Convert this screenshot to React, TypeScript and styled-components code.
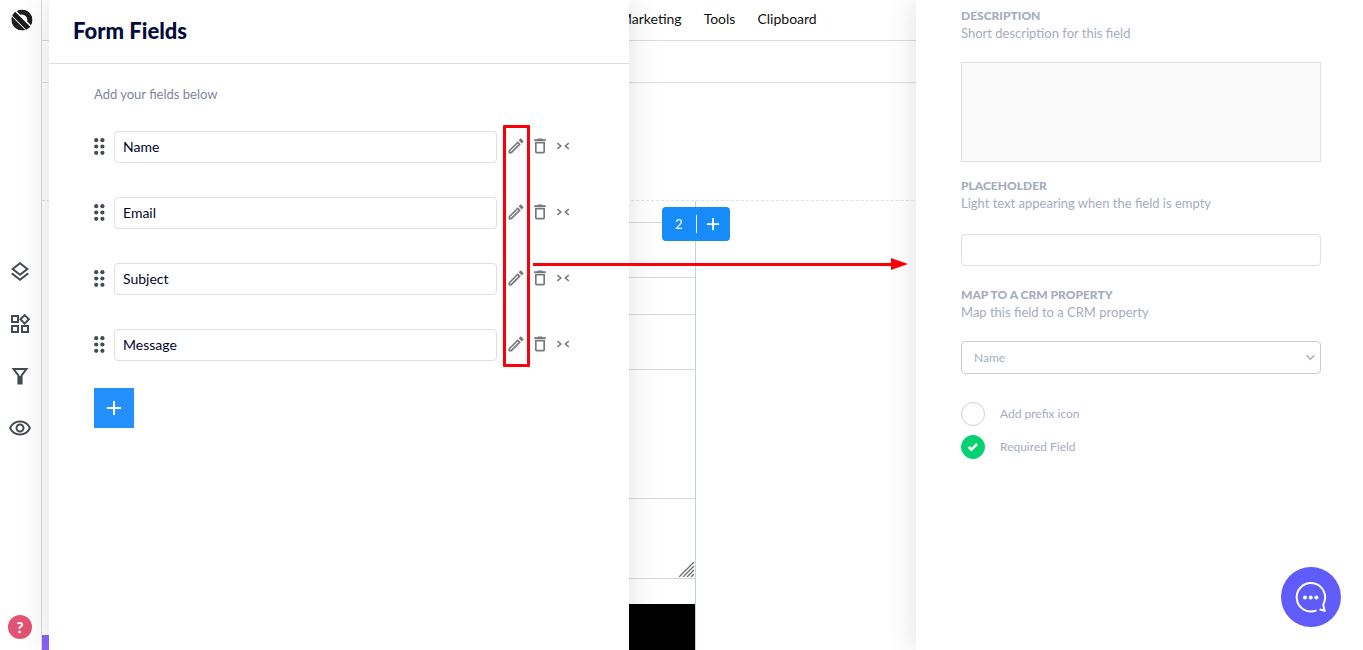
import React from "react";
import styled, { createGlobalStyle } from "styled-components";
import {
  MdOutlineLayers,
  MdOutlineWidgets,
  MdOutlineRemoveRedEye,
  MdOutlineEdit,
  MdDeleteOutline,
} from "react-icons/md";

const GlobalStyle = createGlobalStyle`
  *, *::before, *::after { box-sizing: border-box; }
  html, body { margin: 0; padding: 0; }
  body {
    font-family: Lato, "Liberation Sans", sans-serif;
    font-size: 14px;
    color: #04042c;
    background: #fff;
    overflow: hidden;
  }
  button { font: inherit; padding: 0; border: 0; background: none; cursor: pointer; }
  input, textarea, select { font: inherit; color: inherit; margin: 0; }
  svg { display: block; }
`;

const Shell = styled.div`
  position: relative;
  display: grid;
  grid-template-columns: 41px 8px 580px minmax(0, 1fr) 447px;
  grid-template-rows: 100vh;
`;

/* ---------- Left rail ---------- */

const Rail = styled.nav`
  grid-column: 1;
  grid-row: 1;
  display: flex;
  flex-direction: column;
  align-items: center;
  justify-content: space-between;
  padding: 9px 1px 11px 0;
  color: #444b54;
  background: #fff;
`;

const LogoLink = styled.a`
  padding-left: 3px;
`;

const RailTools = styled.div`
  display: flex;
  flex-direction: column;
  gap: 28px;
  padding-top: 54px;
`;

const IconButton = styled.button`
  display: flex;
  align-items: center;
  justify-content: center;
  color: inherit;
`;

const HelpButton = styled.button`
  width: 24px;
  height: 24px;
  border-radius: 50%;
  background: #e25272;
  color: #fff;
  font-size: 15px;
  font-weight: 900;
`;

/* ---------- Page editor behind the drawers ---------- */

const Editor = styled.main`
  position: relative;
  grid-column: 2 / -1;
  grid-row: 1;
  min-width: 0;
  overflow: hidden;
  border-left: 1px solid #dadada;
`;

const Menu = styled.nav`
  display: flex;
  align-items: center;
  gap: 22px;
  height: 41px;
  padding: 0 0 2px 577px;
  border-bottom: 1px solid #dcdcdc;
`;

const MenuLink = styled.a`
  color: #111;
  text-decoration: none;
  font-size: 14px;
  line-height: 20px;
`;

const SubBar = styled.div`
  height: 42px;
  border-bottom: 1px solid #dcdcdc;
`;

const Section = styled.section`
  margin-top: 117px;
  border-top: 1px dashed #e2e2e2;
`;

const FormModule = styled.div`
  position: relative;
  display: flex;
  flex-direction: column;
  gap: 36px;
  width: 654px;
  height: 450px;
  padding: 21px 0 0 30px;
  border-right: 1px solid #b9d3ec;
`;

const PreviewInput = styled.input`
  flex: none;
  height: 56px;
  border: 1px solid #d8d8d8;
  border-right: 0;
  background: #fff;
`;

const PreviewArea = styled.div`
  position: relative;
  display: flex;
  flex: none;
  margin: 92px 0 -11px;

  textarea {
    flex: 1;
    height: 81px;
    resize: none;
    border: 1px solid #d8d8d8;
    border-right: 0;
    background: #fff;
  }

  svg {
    position: absolute;
    right: 1px;
    bottom: 2px;
  }
`;

const Submit = styled.button`
  flex: none;
  height: 62px;
  background: #000;
`;

const ModuleBadge = styled.div`
  position: absolute;
  top: 6px;
  right: -35px;
  display: flex;
  align-items: center;
  width: 68px;
  height: 34px;
  border-radius: 4px;
  background: #178cf9;
  color: #fff;
  font-size: 13px;

  span {
    flex: 1;
    text-align: center;
  }

  button {
    flex: 1;
    display: flex;
    justify-content: center;
    align-items: center;
    height: 18px;
    border-left: 1px solid #fff;
    color: #fff;
  }
`;

const CornerTab = styled.div`
  position: absolute;
  left: 0;
  bottom: 0;
  width: 30px;
  height: 15px;
  background: #8a63f5;
`;

/* ---------- Form fields drawer ---------- */

const Drawer = styled.section`
  grid-column: 3;
  grid-row: 1;
  z-index: 1;
  background: #fff;
  box-shadow: 0 0 30px rgba(0, 0, 0, 0.13);
`;

const DrawerHeader = styled.header`
  display: flex;
  align-items: center;
  height: 64px;
  padding: 0 24px 2px;
  border-bottom: 1px solid #dedede;

  h1 {
    margin: 0;
    font-size: 22px;
    line-height: 28px;
    font-weight: 900;
    color: #020b3c;
  }
`;

const DrawerBody = styled.div`
  padding: 20px 45px;
`;

const Hint = styled.p`
  margin: 0;
  font-size: 13px;
  line-height: 20px;
  color: #7f849c;
`;

const FieldList = styled.ul`
  display: flex;
  flex-direction: column;
  gap: 34px;
  margin: 27px 0;
  padding: 0;
  list-style: none;
`;

const FieldRow = styled.li`
  display: flex;
  align-items: center;
  color: #75787e;
`;

const DragHandle = styled(IconButton)`
  width: 20px;
  padding-bottom: 2px;
  justify-content: flex-start;
  color: #444b54;
`;

const TextInput = styled.input`
  flex: 1;
  min-width: 0;
  width: 100%;
  height: 32px;
  padding: 0 8px 2px;
  border: 1px solid #dedfe1;
  border-radius: 4px;
  background: #fff;
  color: #04042c;
  font-size: 14px;
`;

const RowActions = styled.div`
  display: flex;
  align-items: center;
  gap: 4px;
  width: 87px;
  padding: 0 9px 2px 9px;
`;

const AddButton = styled(IconButton)`
  width: 40px;
  height: 40px;
  background: #2490fb;
  color: #fff;
`;

/* ---------- Field settings panel ---------- */

const Panel = styled.aside`
  grid-column: 5;
  grid-row: 1;
  z-index: 1;
  padding: 8px 42px 0 45px;
  background: #fff;
  color: #a6acbf;
  box-shadow: 0 0 30px rgba(0, 0, 0, 0.13);
`;

const Setting = styled.div<{ $gap: number }>`
  display: flex;
  flex-direction: column;
  margin-bottom: ${(p) => p.$gap}px;

  label {
    font-size: 12px;
    line-height: 16px;
    font-weight: 900;
    text-transform: uppercase;
  }

  p {
    margin: 0;
    font-size: 13px;
    line-height: 18px;
  }
`;

const DescriptionArea = styled.textarea`
  height: 100px;
  margin-top: 20px;
  border: 1px solid #dedfe1;
  background: #fafafa;
  resize: none;
`;

const PlaceholderInput = styled(TextInput)`
  flex: none;
  margin-top: 22px;
`;

const SelectWrap = styled.div`
  position: relative;
  margin-top: 20px;

  select {
    display: block;
    width: 100%;
    height: 33px;
    padding: 0 12px;
    appearance: none;
    border: 1px solid #cacbdb;
    border-radius: 4px;
    background: #fff;
    font-size: 12px;
  }

  svg {
    position: absolute;
    right: 6px;
    top: 13px;
    pointer-events: none;
  }
`;

const CheckLabel = styled.label`
  position: relative;
  display: flex;
  align-items: center;
  gap: 15px;
  margin-bottom: 9px;
  font-size: 12px;
  line-height: 22px;

  input {
    appearance: none;
    width: 24px;
    height: 24px;
    border: 1px solid #cfcfcf;
    border-radius: 50%;
    background: #fff;
  }

  input:checked {
    border-color: #04d270;
    background: #04d270;
  }

  svg {
    position: absolute;
    left: 6px;
    top: 6px;
    visibility: hidden;
    pointer-events: none;
  }

  input:checked + svg {
    visibility: visible;
  }
`;

const ChatButton = styled.button`
  position: absolute;
  right: 22px;
  bottom: 23px;
  z-index: 2;
  display: flex;
  align-items: center;
  justify-content: center;
  width: 60px;
  height: 60px;
  border-radius: 50%;
  background: #5f5cfb;
`;

/* ---------- Red call-outs drawn over the page ---------- */

const Highlight = styled.div`
  position: absolute;
  z-index: 3;
  left: 503px;
  top: 125px;
  width: 27px;
  height: 242px;
  border: 3px solid #fb0007;
  border-radius: 1px;
  pointer-events: none;
`;

const Arrow = styled.div`
  position: absolute;
  z-index: 3;
  left: 533px;
  right: 455px;
  top: 258px;
  display: flex;
  align-items: center;
  pointer-events: none;

  &::before {
    content: "";
    flex: 1;
    height: 3px;
    background: #fb0007;
  }
`;

const Logo = () => (
  <svg width="22" height="22" viewBox="0 0 22 22" aria-hidden="true">
    <defs>
      <clipPath id="disc">
        <circle cx="11" cy="11" r="10.6" />
      </clipPath>
    </defs>
    <g clipPath="url(#disc)">
      <circle cx="11" cy="11" r="8" fill="none" stroke="#1d1d1d" strokeWidth="5.2" />
      <path d="M-2 0L22 24" stroke="#fff" strokeWidth="8" />
      <path d="M-2 0L22 24" stroke="#1d1d1d" strokeWidth="5" />
      <path d="M-2 6.2L16 24.2" stroke="#1d1d1d" strokeWidth="2" />
    </g>
  </svg>
);

const FunnelIcon = () => (
  <svg width="24" height="24" viewBox="0 0 24 24" fill="none" stroke="currentColor" aria-hidden="true">
    <path d="M5.5 5h13L13.6 11.4v8.1h-3.2v-8.1z" strokeWidth="2" />
    <path d="M12 12v8" strokeWidth="4" />
  </svg>
);

const DotsIcon = () => (
  <svg width="11" height="17" viewBox="0 0 11 17" fill="currentColor" aria-hidden="true">
    {[2.2, 8.5, 14.8].map((y) => (
      <React.Fragment key={y}>
        <circle cx="2.2" cy={y} r="2.1" />
        <circle cx="8.4" cy={y} r="2.1" />
      </React.Fragment>
    ))}
  </svg>
);

const CollapseIcon = () => (
  <svg width="18" height="20" viewBox="0 0 18 20" fill="none" stroke="currentColor" strokeWidth="1.5" aria-hidden="true">
    <path d="M3.4 7.2L6.8 10l-3.4 2.8M14.8 7.2L11.4 10l3.4 2.8" />
  </svg>
);

const PlusIcon = ({ size }: { size: number }) => (
  <svg width={size} height={size} viewBox="0 0 16 16" stroke="currentColor" strokeWidth="2" aria-hidden="true">
    <path d="M8 1v14M1 8h14" />
  </svg>
);

const fields = ["Name", "Email", "Subject", "Message"];

const options = [
  { text: "Add prefix icon", checked: false },
  { text: "Required Field", checked: true },
];

export default function App() {
  return (
    <>
      <GlobalStyle />
      <Shell>
        <Rail aria-label="Tools">
          <LogoLink href="#home" aria-label="Home"><Logo /></LogoLink>
          <RailTools>
            <IconButton aria-label="Layers"><MdOutlineLayers size={24} /></IconButton>
            <IconButton aria-label="Widgets"><MdOutlineWidgets size={24} /></IconButton>
            <IconButton aria-label="Filter"><FunnelIcon /></IconButton>
            <IconButton aria-label="Preview"><MdOutlineRemoveRedEye size={24} /></IconButton>
          </RailTools>
          <HelpButton aria-label="Help">?</HelpButton>
        </Rail>

        <Editor>
          <Menu aria-label="Main menu">
            <MenuLink href="#marketing">Marketing</MenuLink>
            <MenuLink href="#tools">Tools</MenuLink>
            <MenuLink href="#clipboard">Clipboard</MenuLink>
          </Menu>
          <SubBar />
          <Section>
            <FormModule>
              <PreviewInput aria-label="Name preview" />
              <PreviewInput aria-label="Email preview" />
              <PreviewArea>
                <textarea aria-label="Message preview" />
                <svg width="15" height="15" viewBox="0 0 15 15" stroke="#6d6d6d" strokeWidth="1.3" aria-hidden="true">
                  <path d="M0 15L15 0M4 15L15 4M8 15L15 8M12 15L15 12" />
                </svg>
              </PreviewArea>
              <Submit aria-label="Submit" />
              <ModuleBadge>
                <span>2</span>
                <button aria-label="Add module"><PlusIcon size={14} /></button>
              </ModuleBadge>
            </FormModule>
          </Section>
          <CornerTab />
        </Editor>

        <Drawer>
          <DrawerHeader><h1>Form Fields</h1></DrawerHeader>
          <DrawerBody>
            <Hint>Add your fields below</Hint>
            <FieldList>
              {fields.map((name) => (
                <FieldRow key={name}>
                  <DragHandle aria-label={`Move ${name}`}><DotsIcon /></DragHandle>
                  <TextInput aria-label={`${name} field`} defaultValue={name} />
                  <RowActions>
                    <IconButton aria-label={`Edit ${name}`}><MdOutlineEdit size={20} /></IconButton>
                    <IconButton aria-label={`Delete ${name}`}><MdDeleteOutline size={20} /></IconButton>
                    <IconButton aria-label={`Collapse ${name}`}><CollapseIcon /></IconButton>
                  </RowActions>
                </FieldRow>
              ))}
            </FieldList>
            <AddButton aria-label="Add field"><PlusIcon size={16} /></AddButton>
          </DrawerBody>
        </Drawer>

        <Panel>
          <Setting $gap={16}>
            <label htmlFor="description">Description</label>
            <p>Short description for this field</p>
            <DescriptionArea id="description" />
          </Setting>
          <Setting $gap={21}>
            <label htmlFor="placeholder">Placeholder</label>
            <p>Light text appearing when the field is empty</p>
            <PlaceholderInput id="placeholder" />
          </Setting>
          <Setting $gap={28}>
            <label htmlFor="crm">Map to a CRM property</label>
            <p>Map this field to a CRM property</p>
            <SelectWrap>
              <select id="crm" defaultValue="Name">
                <option>Name</option>
              </select>
              <svg width="9" height="7" viewBox="0 0 9 7" fill="none" stroke="#a6acbf" strokeWidth="1.3" aria-hidden="true">
                <path d="M0.7 1.2l3.8 4 3.8-4" />
              </svg>
            </SelectWrap>
          </Setting>
          {options.map(({ text, checked }) => (
            <CheckLabel key={text}>
              <input type="checkbox" defaultChecked={checked} />
              <svg width="12" height="12" viewBox="0 0 12 12" fill="none" stroke="#fff" strokeWidth="2.6" aria-hidden="true">
                <path d="M1.6 5.8l2.8 2.8 5.6-5.6" />
              </svg>
              {text}
            </CheckLabel>
          ))}
        </Panel>

        <Highlight />
        <Arrow>
          <svg width="17" height="12" viewBox="0 0 17 12" aria-hidden="true">
            <path d="M0 0L17 6L0 12z" fill="#fb0007" />
          </svg>
        </Arrow>
        <ChatButton aria-label="Open chat">
          <svg width="32" height="32" viewBox="0 0 32 32" fill="none" stroke="#fff" strokeWidth="2" aria-hidden="true">
            <path d="M21.5 29.3A14.2 14.2 0 1 1 28.6 22.6q-.6 1.4 0 3l1 4-5-1" />
            <g fill="#fff" stroke="none">
              <circle cx="10" cy="16.5" r="2" />
              <circle cx="15.7" cy="16.5" r="2" />
              <circle cx="21.4" cy="16.5" r="2" />
            </g>
          </svg>
        </ChatButton>
      </Shell>
    </>
  );
}
